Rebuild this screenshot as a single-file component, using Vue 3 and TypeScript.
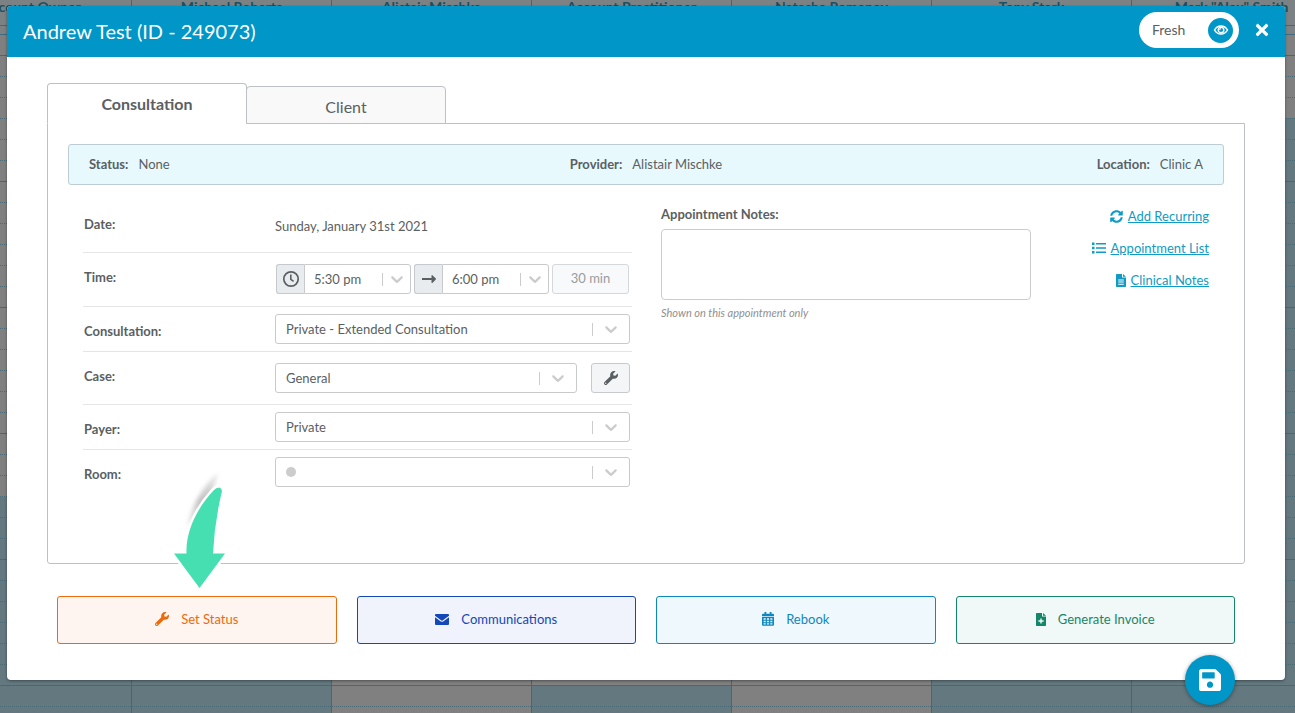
<script setup lang="ts">
import { ref } from 'vue'

interface CalendarColumn {
  name: string
  shadedFrom: number
}

interface Action {
  key: string
  label: string
  icon: 'wrench' | 'mail' | 'calendar' | 'invoice'
}

// shadedFrom: distance in pixels from the top of the slots to the unavailable hours
const columns: CalendarColumn[] = [
  { name: 'Account Owner', shadedFrom: 462 },
  { name: 'Michael Roberts', shadedFrom: 462 },
  { name: 'Alistair Mischke', shadedFrom: 2000 },
  { name: 'Account Practitioner', shadedFrom: 650 },
  { name: 'Natasha Romanov', shadedFrom: 2000 },
  { name: 'Tony Stark', shadedFrom: 462 },
  { name: 'Mark "Alex" Smith', shadedFrom: 83 },
]

const slotCount = 48

const actions: Action[] = [
  { key: 'status', label: 'Set Status', icon: 'wrench' },
  { key: 'comms', label: 'Communications', icon: 'mail' },
  { key: 'rebook', label: 'Rebook', icon: 'calendar' },
  { key: 'invoice', label: 'Generate Invoice', icon: 'invoice' },
]

const activeTab = ref('consultation')
const startTime = ref('5:30 pm')
const endTime = ref('6:00 pm')
const consultation = ref('Private - Extended Consultation')
const caseName = ref('General')
const payer = ref('Private')
const room = ref('')
const notes = ref('')

const wrenchPath =
  'M507.73 109.1c-2.24-9.03-13.54-12.09-20.12-5.51l-74.36 74.36-67.88-11.31-11.31-67.88 74.36-74.36c6.62-6.62 3.43-17.9-5.66-20.16-47.38-11.74-99.55.91-136.58 37.93-39.64 39.64-50.55 97.1-34.05 147.2L18.74 402.76c-24.99 24.99-24.99 65.51 0 90.5 24.99 24.99 65.51 24.99 90.5 0l213.21-213.21c50.12 16.71 107.47 5.68 147.37-34.22 37.07-37.07 49.7-89.32 37.91-136.73zM64 472c-13.25 0-24-10.75-24-24 0-13.26 10.75-24 24-24s24 10.74 24 24c0 13.25-10.75 24-24 24z'
const chevronPath =
  'M4.516 7.548c0.436-0.446 1.043-0.481 1.576 0l3.908 3.747 3.908-3.747c0.533-0.481 1.141-0.446 1.574 0 0.436 0.445 0.408 1.197 0 1.615-0.406 0.418-4.695 4.502-4.695 4.502-0.217 0.223-0.502 0.335-0.787 0.335s-0.57-0.112-0.789-0.335c0 0-4.287-4.084-4.695-4.502s-0.436-1.17 0-1.615z'
</script>

<template>
  <div class="screen">
    <div class="calendar" aria-hidden="true">
      <div v-for="col in columns" :key="col.name" class="cal-col">
        <div class="cal-name">{{ col.name }}</div>
        <div class="cal-allday"></div>
        <div class="cal-slots">
          <div class="cal-open" :style="{ height: col.shadedFrom + 'px' }"></div>
          <div class="cal-shaded"></div>
          <div class="cal-lines">
            <div v-for="n in slotCount" :key="n" class="slot"></div>
          </div>
        </div>
      </div>
    </div>

    <section class="modal" role="dialog" aria-labelledby="modal-title">
      <header class="modal-header">
        <h1 id="modal-title">Andrew Test (ID - 249073)</h1>
        <button type="button" class="fresh">
          <span>Fresh</span>
          <span class="fresh-eye">
            <svg viewBox="0 0 16 16" width="16" height="16" fill="none" stroke="currentColor">
              <path d="M1.5 8C4.500 2.600 11.500 2.600 14.500 8C11.500 13.400 4.500 13.400 1.500 8Z" stroke-width="1.500" />
              <circle cx="8" cy="8" r="2.800" stroke-width="1.400" />
              <path d="M6.600 8a1.400 1.400 0 0 1 1.400-1.400" stroke-width="1" />
            </svg>
          </span>
        </button>
        <button type="button" class="close" aria-label="Close">
          <svg viewBox="0 0 352 512" width="14" height="18" fill="currentColor">
            <path d="M242.72 256l100.07-100.07c12.28-12.28 12.28-32.19 0-44.48l-22.24-22.24c-12.28-12.28-32.19-12.28-44.48 0L176 189.28 75.93 89.21c-12.28-12.28-32.19-12.28-44.48 0L9.21 111.45c-12.28 12.28-12.28 32.19 0 44.48L109.28 256 9.21 356.07c-12.28 12.28-12.28 32.19 0 44.48l22.24 22.24c12.28 12.28 32.2 12.28 44.48 0L176 322.72l100.07 100.07c12.28 12.28 32.2 12.28 44.48 0l22.24-22.24c12.28-12.28 12.28-32.19 0-44.48L242.72 256z" />
          </svg>
        </button>
      </header>

      <div class="modal-body">
        <div class="tabs" role="tablist">
          <button type="button" role="tab" class="tab" :class="{ active: activeTab === 'consultation' }" :aria-selected="activeTab === 'consultation'" @click="activeTab = 'consultation'">Consultation</button>
          <button type="button" role="tab" class="tab" :class="{ active: activeTab === 'client' }" :aria-selected="activeTab === 'client'" @click="activeTab = 'client'">Client</button>
        </div>

        <div class="panel" role="tabpanel">
          <div class="summary">
            <span><b>Status:</b>None</span>
            <span><b>Provider:</b>Alistair Mischke</span>
            <span><b>Location:</b>Clinic A</span>
          </div>

          <div class="content">
            <form class="details" @submit.prevent>
              <div class="row tall">
                <span class="label">Date:</span>
                <div class="value">Sunday, January 31st 2021</div>
              </div>
              <div class="row time-row">
                <label class="label" for="start">Time:</label>
                <div class="value times">
                  <div class="group">
                    <span class="addon">
                      <svg viewBox="0 0 18 18" width="18" height="18" fill="none" stroke="currentColor">
                        <circle cx="9" cy="9" r="7.200" stroke-width="1.700" />
                        <path d="M8.800 4.600v4.800l2.800 2" stroke-width="1.600" />
                      </svg>
                    </span>
                    <span class="select slim">
                      <select id="start" v-model="startTime"><option>5:30 pm</option></select>
                      <svg class="chevron" viewBox="0 0 20 20"><path :d="chevronPath" /></svg>
                    </span>
                  </div>
                  <div class="group">
                    <span class="addon">
                      <svg viewBox="0 0 16 16" width="16" height="16" fill="currentColor">
                        <path d="M1 7h9.500V4.600c0-.5.600-.700.900-.400l3.400 3.400c.300.300.300.600 0 .900l-3.400 3.400c-.300.300-.900.100-.900-.400V9H1z" />
                      </svg>
                    </span>
                    <span class="select slim">
                      <select v-model="endTime" aria-label="End time"><option>6:00 pm</option></select>
                      <svg class="chevron" viewBox="0 0 20 20"><path :d="chevronPath" /></svg>
                    </span>
                  </div>
                  <input class="duration" value="30 min" aria-label="Duration" disabled />
                </div>
              </div>
              <div class="row">
                <label class="label" for="consultation">Consultation:</label>
                <div class="value">
                  <span class="select">
                    <select id="consultation" v-model="consultation"><option>Private - Extended Consultation</option></select>
                    <svg class="chevron" viewBox="0 0 20 20"><path :d="chevronPath" /></svg>
                  </span>
                </div>
              </div>
              <div class="row tall">
                <label class="label" for="case">Case:</label>
                <div class="value case">
                  <span class="select">
                    <select id="case" v-model="caseName"><option>General</option></select>
                    <svg class="chevron" viewBox="0 0 20 20"><path :d="chevronPath" /></svg>
                  </span>
                  <button type="button" class="tool" aria-label="Manage cases">
                    <svg viewBox="0 0 512 512" width="14" height="14" fill="currentColor"><path :d="wrenchPath" /></svg>
                  </button>
                </div>
              </div>
              <div class="row">
                <label class="label" for="payer">Payer:</label>
                <div class="value">
                  <span class="select">
                    <select id="payer" v-model="payer"><option>Private</option></select>
                    <svg class="chevron" viewBox="0 0 20 20"><path :d="chevronPath" /></svg>
                  </span>
                </div>
              </div>
              <div class="row">
                <label class="label" for="room">Room:</label>
                <div class="value">
                  <span class="select">
                    <select id="room" v-model="room"><option value=""></option></select>
                    <i class="dot"></i>
                    <svg class="chevron" viewBox="0 0 20 20"><path :d="chevronPath" /></svg>
                  </span>
                </div>
              </div>
            </form>

            <div class="notes">
              <label for="notes">Appointment Notes:</label>
              <textarea id="notes" v-model="notes"></textarea>
              <small>Shown on this appointment only</small>
            </div>

            <nav class="links">
              <a href="#recurring">
                <svg viewBox="0 0 512 512" width="13" height="13" fill="currentColor">
                  <path d="M370.72 133.28C339.458 104.008 298.888 87.962 255.848 88c-77.458.068-144.328 53.178-162.791 126.85-1.344 5.363-6.122 9.15-11.651 9.15H24.103c-7.498 0-13.194-6.807-11.807-14.176C33.933 94.924 134.813 8 256 8c66.448 0 126.791 26.136 171.315 68.685L463.03 40.97C478.149 25.851 504 36.559 504 57.941V192c0 13.255-10.745 24-24 24H345.941c-21.382 0-32.09-25.851-16.971-40.971l41.75-41.749zM32 296h134.059c21.382 0 32.09 25.851 16.971 40.971l-41.75 41.75c31.262 29.273 71.835 45.319 114.876 45.28 77.418-.07 144.315-53.144 162.787-126.849 1.344-5.363 6.122-9.15 11.651-9.15h57.304c7.498 0 13.194 6.807 11.807 14.176C478.067 417.076 377.187 504 256 504c-66.448 0-126.791-26.136-171.315-68.685L48.97 471.03C33.851 486.149 8 475.441 8 454.059V320c0-13.255 10.745-24 24-24z" />
                </svg>
                <span>Add Recurring</span>
              </a>
              <a href="#appointments">
                <svg viewBox="0 0 14 14" width="14" height="14" fill="currentColor">
                  <path d="M0 1.500h2.500v2.500H0zM4 2h10v1.600H4zM0 5.800h2.500v2.500H0zM4 6.200h10v1.600H4zM0 10h2.500v2.500H0zM4 10.500h10v1.600H4z" />
                </svg>
                <span>Appointment List</span>
              </a>
              <a href="#notes">
                <svg viewBox="0 0 10 13" width="10" height="13" fill="currentColor">
                  <path fill-rule="evenodd" d="M.7 0H6v3.400h4v8.900a.7.700 0 0 1-.7.700H.7a.7.700 0 0 1-.7-.7V.7A.7.700 0 0 1 .7 0zM7 0l3 2.700H7zM2.200 5.400v1h5.600v-1zm0 2.200v1h5.600v-1zm0 2.200v1h5.600v-1z" />
                </svg>
                <span>Clinical Notes</span>
              </a>
            </nav>
          </div>
        </div>

        <div class="actions">
          <button v-for="action in actions" :key="action.key" type="button" class="action" :class="action.key">
            <svg v-if="action.icon === 'wrench'" viewBox="0 0 512 512" width="14" height="14" fill="currentColor"><path :d="wrenchPath" /></svg>
            <svg v-else-if="action.icon === 'mail'" viewBox="0 0 14 11" width="14" height="11" fill="currentColor">
              <path d="M1 0h12a1 1 0 0 1 1 1v.800L7.600 6.400a1 1 0 0 1-1.200 0L0 1.800V1a1 1 0 0 1 1-1zM0 3.200l5.800 4.200a2 2 0 0 0 2.400 0L14 3.200V10a1 1 0 0 1-1 1H1a1 1 0 0 1-1-1z" />
            </svg>
            <svg v-else-if="action.icon === 'calendar'" viewBox="0 0 12 14" width="12" height="14" fill="currentColor">
              <path fill-rule="evenodd" d="M2.500 0h1.800v1.700h3.400V0h1.800v1.700H11a1 1 0 0 1 1 1v1.500H0V2.700a1 1 0 0 1 1-1h1.500zM0 5h12v7.800a1 1 0 0 1-1 1H1a1 1 0 0 1-1-1zM1.600 6.200v1.600h2.100V6.200zm3.300 0v1.600h2.200V6.200zm3.400 0v1.600h2.100V6.200zM1.600 8.800v1.400h2.100V8.800zm3.300 0v1.400h2.200V8.800zm3.400 0v1.400h2.100V8.800zM1.600 11.200v1.400h2.100v-1.400zm3.300 0v1.400h2.200v-1.400zm3.400 0v1.400h2.100v-1.400z" />
            </svg>
            <svg v-else viewBox="0 0 10 13" width="10" height="13" fill="currentColor">
              <path fill-rule="evenodd" d="M.7 0H6v3.400h4v8.900a.7.700 0 0 1-.7.700H.7a.7.700 0 0 1-.7-.7V.7A.7.700 0 0 1 .7 0zM7 0l3 2.700H7zM4.300 5.400v1.900H2.400v1.400h1.900v1.900h1.400V8.700h1.900V7.300H5.700V5.400z" />
            </svg>
            <span>{{ action.label }}</span>
          </button>
        </div>
      </div>

      <svg class="pointer" viewBox="0 0 70 120" width="70" height="120" aria-hidden="true">
        <defs>
          <filter id="soft" x="-30%" y="-30%" width="160%" height="160%"><feGaussianBlur stdDeviation="2" /></filter>
          <linearGradient id="fade" x1="0" y1="0" x2="0" y2="1">
            <stop offset="0" stop-color="#aaa" stop-opacity=".3" />
            <stop offset=".5" stop-color="#999" stop-opacity=".6" />
            <stop offset="1" stop-color="#aaa" stop-opacity=".2" />
          </linearGradient>
        </defs>
        <path d="M53 3C38 16 26 36 22 58L44 32Z" fill="url(#fade)" filter="url(#soft)" />
        <path class="pointer-shape" d="M48.500 20.500Q51 17.500 54.300 17.500Q57.500 18.500 56.800 22Q49.500 52 48 83.500H60L34.500 118L9 83.500H21.500C20.500 58 35 35 48.500 20.500Z" />
      </svg>

      <button type="button" class="save" aria-label="Save">
        <svg viewBox="0 0 448 512" width="22" height="26" fill="currentColor">
          <path d="M433.941 129.941l-83.882-83.882A48 48 0 0 0 316.118 32H48C21.49 32 0 53.49 0 80v352c0 26.51 21.49 48 48 48h352c26.51 0 48-21.49 48-48V163.882a48 48 0 0 0-14.059-33.941zM224 416c-35.346 0-64-28.654-64-64 0-35.346 28.654-64 64-64s64 28.654 64 64c0 35.346-28.654 64-64 64zm96-304.52V212c0 6.627-5.373 12-12 12H76c-6.627 0-12-5.373-12-12V108c0-6.627 5.373-12 12-12h228.52c3.183 0 6.235 1.264 8.485 3.515l3.48 3.48A11.996 11.996 0 0 1 320 111.48z" />
        </svg>
      </button>
    </section>
  </div>
</template>

<style>
html,
body {
  background: #808080;
}
</style>

<style scoped>
.screen,
.screen * {
  box-sizing: border-box;
}
.screen {
  position: relative;
  min-height: 100vh;
  padding: 6px 10px 32px 7px;
  overflow: hidden;
  font-family: Lato, "Liberation Sans", sans-serif;
  font-size: 13px;
  line-height: 18px;
  color: #5a5f63;
}
button,
select,
input,
textarea {
  font: inherit;
  color: inherit;
  margin: 0;
}
button {
  cursor: pointer;
}
svg {
  display: block;
  flex: none;
}

/* Dimmed calendar behind the dialog */
.calendar {
  position: absolute;
  inset: 0;
  display: flex;
  margin-left: -68px;
  background: #808080;
}
.cal-col {
  flex: 0 0 200px;
  display: flex;
  flex-direction: column;
  border-right: 1px solid #40697a;
}
.cal-name {
  height: 26px;
  font-size: 14px;
  line-height: 13px;
  text-align: center;
  font-weight: 700;
  color: #1c4f61;
  background: #7c8284;
  border-bottom: 1px solid #3f6b7c;
  white-space: nowrap;
}
.cal-allday {
  height: 9px;
  background: #7c8284;
  border-bottom: 1px solid #3f6b7c;
}
.cal-slots {
  position: relative;
  flex: 1;
  display: flex;
  flex-direction: column;
  overflow: hidden;
}
.cal-open {
  flex: none;
}
.cal-shaded {
  flex: 1;
  background: #63797f;
}
.cal-lines {
  position: absolute;
  inset: 0;
}
.slot {
  height: 21px;
  border-bottom: 1px dotted #4a6b76;
}
.slot:nth-child(6n + 1) {
  border-bottom: 1px solid #3f6b7e;
}

/* Dialog */
.modal {
  position: relative;
  background: #fff;
  border-radius: 4px;
  box-shadow: 0 1px 3px rgba(0, 0, 0, 0.4);
}
.modal-header {
  display: flex;
  align-items: center;
  height: 51px;
  padding: 0 16px 3px;
  color: #fff;
  background: #0096c7;
  border-radius: 4px 4px 0 0;
}
h1 {
  flex: 1;
  margin: 0;
  padding-top: 2px;
  font-size: 20px;
  line-height: 24px;
  font-weight: 400;
}
.fresh {
  display: flex;
  align-items: center;
  justify-content: space-between;
  width: 100px;
  height: 36px;
  padding: 0 6px 0 13px;
  border: 0;
  border-radius: 18px;
  background: #fff;
  color: #5a5f63;
  font-size: 14px;
}
.fresh-eye {
  display: grid;
  place-items: center;
  width: 25px;
  height: 25px;
  border-radius: 50%;
  color: #fff;
  background: #0096c7;
}
.close {
  margin-left: 16px;
  padding: 0;
  border: 0;
  color: #fff;
  background: none;
}
.modal-body {
  padding: 26px 40px 36px;
}
.tabs {
  display: flex;
  align-items: flex-end;
}
.tab {
  position: relative;
  width: 200px;
  height: 38px;
  padding: 4px 0 0;
  margin: 0 0 -1px -1px;
  border: 1px solid #bdc1c5;
  border-radius: 4px 4px 0 0;
  background: #f9f9fa;
  font-size: 16px;
}
.tab.active {
  height: 41px;
  padding: 1px 0 0;
  margin-left: 0;
  border-bottom-color: #fff;
  background: #fff;
  font-weight: 700;
}
.panel {
  padding: 20px 20px 68px;
  border: 1px solid #bdc1c5;
  border-radius: 0 0 3px 3px;
}
.summary {
  display: grid;
  grid-template-columns: 1fr auto 1fr;
  padding: 10px 20px 11px;
  border: 1px solid #bdcdd3;
  border-radius: 3px;
  background: #e7f9fd;
}
.summary span:last-child {
  text-align: right;
}
.summary b {
  margin-right: 10px;
}
.content {
  display: grid;
  grid-template-columns: 549fr 370fr 149fr;
  column-gap: 29px;
  padding: 15px 15px 0;
}
.row {
  display: grid;
  grid-template-columns: 192fr 355fr;
  min-height: 45px;
  padding-right: 2px;
  border-bottom: 1px solid #e3e5e7;
}
.row.tall {
  min-height: 53px;
}
.row.time-row {
  min-height: 54px;
}
.row:last-child {
  border-bottom-color: transparent;
}
.label {
  padding: 15px 0 0 1px;
  font-weight: 700;
}
.value {
  display: flex;
  align-items: center;
  min-width: 0;
}
.times {
  display: grid;
  grid-template-columns: 135fr 135fr 77fr;
  gap: 3px;
  padding: 0 1px 1px;
}
.group {
  display: flex;
  min-width: 0;
}
.addon {
  display: grid;
  place-items: center;
  width: 28px;
  border: 1px solid #c6cace;
  border-right: 0;
  border-radius: 3px 0 0 3px;
  background: #e9ecef;
}
.group .select select {
  border-radius: 0 3px 3px 0;
}
.select {
  position: relative;
  flex: 1;
  min-width: 0;
}
.select select {
  display: block;
  width: 100%;
  height: 30px;
  padding: 0 38px 0 10px;
  border: 1px solid #c8cacc;
  border-radius: 3px;
  background: linear-gradient(#ccc, #ccc) right 36px center / 1px 13px no-repeat #fff;
  appearance: none;
}
.select.slim select {
  padding-right: 24px;
  padding-left: 9px;
  background-position: right 27px center;
}
.chevron {
  position: absolute;
  top: 5px;
  right: 9px;
  width: 20px;
  height: 20px;
  fill: #ccc;
  pointer-events: none;
}
.slim .chevron {
  right: 4px;
}
.dot {
  position: absolute;
  top: 10px;
  left: 11px;
  width: 10px;
  height: 10px;
  border-radius: 50%;
  background: #ccc;
}
.duration {
  min-width: 0;
  width: 100%;
  height: 30px;
  padding: 0 0 2px;
  border: 1px solid #d5d8da;
  border-radius: 3px;
  background: #f8f9fa;
  color: #999c9f;
  text-align: center;
}
.case {
  gap: 14px;
}
.tool {
  display: grid;
  place-items: center;
  width: 39px;
  height: 30px;
  padding: 0;
  border: 1px solid #c6cace;
  border-radius: 3px;
  background: #f3f5f7;
}
.notes {
  display: flex;
  flex-direction: column;
  padding-top: 5px;
}
.notes label {
  font-weight: 700;
}
.notes textarea {
  height: 71px;
  margin-top: 6px;
  padding: 6px 10px;
  border: 1px solid #ccc;
  border-radius: 4px;
  resize: none;
}
.notes small {
  margin-top: 4px;
  font-size: 11px;
  font-style: italic;
  color: #8f8f8f;
}
.links {
  display: flex;
  flex-direction: column;
  align-items: flex-end;
  gap: 14px;
  padding-top: 7px;
}
.links a {
  display: flex;
  align-items: center;
  gap: 5px;
  color: #0f9bc4;
  text-decoration: none;
  white-space: nowrap;
}
.links span {
  text-decoration: underline;
}
.actions {
  display: grid;
  grid-template-columns: repeat(4, 1fr);
  gap: 20px;
  padding: 32px 10px 0;
}
.action {
  display: flex;
  align-items: center;
  justify-content: center;
  gap: 12px;
  height: 48px;
  padding: 0 0 2px;
  border: 1px solid;
  border-radius: 3px;
}
.status {
  color: #ec6a0c;
  background: #fff5f0;
}
.comms {
  color: #1447b8;
  background: #f0f3fb;
}
.rebook {
  color: #0d87c0;
  background: #eff8fc;
}
.invoice {
  color: #14876a;
  background: #f1f8f8;
}
.pointer {
  position: absolute;
  left: 158px;
  bottom: 90px;
  pointer-events: none;
}
.pointer-shape {
  fill: #46dfb1;
  stroke: #fff;
  stroke-width: 5px;
  stroke-linejoin: round;
  paint-order: stroke;
}
.save {
  position: absolute;
  right: 50px;
  bottom: -25px;
  display: grid;
  place-items: center;
  width: 50px;
  height: 50px;
  padding: 0;
  border: 0;
  border-radius: 50%;
  color: #fff;
  background: #0096c7;
  box-shadow: 0 1px 4px rgba(0, 0, 0, 0.4);
}
</style>
